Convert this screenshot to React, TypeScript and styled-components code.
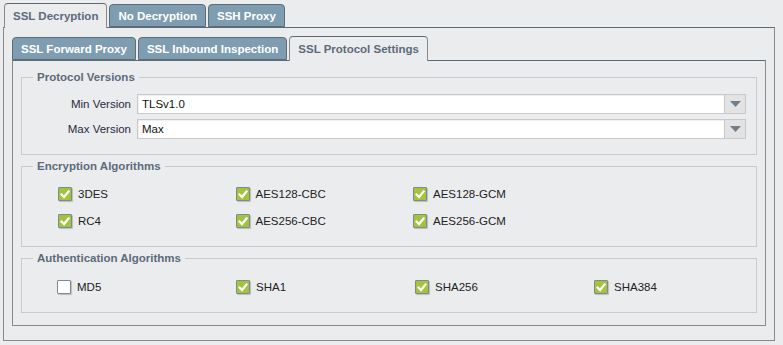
import React, { FC } from 'react';
import styled, { createGlobalStyle } from 'styled-components';

const GlobalStyle = createGlobalStyle`
  html, body {
    margin: 0;
    background: #ebecee;
    font-family: "Liberation Sans", Arial, sans-serif;
    font-size: 11px;
    color: #222;
  }
`;

const Page = styled.div`
  padding: 3px 8px 5px 3px;
`;

const TabStrip = styled.div<{ $inset?: number }>`
  display: flex;
  align-items: flex-end;
  gap: 2px;
  padding-left: ${p => p.$inset ?? 1}px;
`;

const Tab = styled.div<{ $active?: boolean; $pad?: number }>`
  position: relative;
  z-index: ${p => (p.$active ? 2 : 1)};
  box-sizing: border-box;
  height: ${p => (p.$active ? 25 : 23)}px;
  margin-bottom: ${p => (p.$active ? -1 : 0)}px;
  padding: 0 ${p => p.$pad ?? 8}px;
  display: flex;
  align-items: center;
  font-weight: bold;
  font-size: 11.5px;
  border: 1px solid ${p => (p.$active ? '#8a8a8a' : '#5d6d7a')};
  border-top-color: ${p => (p.$active ? '#5d6b77' : '#5d6d7a')};
  border-bottom: ${p => (p.$active ? 'none' : '1px solid #5d6d7a')};
  border-radius: 4px 4px 0 0;
  background: ${p => (p.$active ? '#ebecee' : '#7f9db1')};
  color: ${p => (p.$active ? '#5c6b7a' : '#ffffff')};
  padding-bottom: ${p => (p.$active ? 1 : 0)}px;
`;

const Panel = styled.div<{ $pad: string }>`
  border: 1px solid #8a8a8a;
  border-top-color: #5d6b77;
  padding: ${p => p.$pad};
`;

const Group = styled.fieldset<{ $pad: string }>`
  margin: 0;
  border: 1px solid #c9cacc;
  padding: ${p => p.$pad};
  min-width: 0;
`;

const Legend = styled.legend`
  margin-left: 11px;
  padding: 0 4px;
  font-weight: bold;
  font-size: 11.5px;
  line-height: 14px;
  color: #5c6b7a;
`;

const Stack = styled.div`
  display: flex;
  flex-direction: column;
  gap: 4px;
`;

const FormGrid = styled.div`
  display: grid;
  grid-template-columns: 109px 1fr;
  column-gap: 6px;
  row-gap: 5px;
  align-items: center;
`;

const FieldLabel = styled.div`
  text-align: right;
  color: #2a2a40;
  font-size: 11.5px;
`;

const Select = styled.div`
  display: flex;
  height: 20px;
  box-sizing: border-box;
`;

const SelectValue = styled.div`
  flex: 1;
  display: flex;
  align-items: center;
  padding: 0 4px;
  background: #ffffff;
  border: 1px solid #c9c9c9;
  box-shadow: inset 1px 1px 0 #efefef;
  color: #111;
  font-size: 11.5px;
`;

const SelectButton = styled.div`
  width: 20px;
  display: flex;
  align-items: center;
  justify-content: center;
  background: #e3e3e4;
  border: 1px solid #c9c9c9;
  border-left: none;
`;

const CheckGrid = styled.div<{ $cols: number; $col: number; $indent: number }>`
  display: grid;
  grid-template-columns: repeat(${p => p.$cols}, ${p => p.$col}px);
  row-gap: 7px;
  padding-left: ${p => p.$indent}px;
`;

const CheckItem = styled.label`
  display: flex;
  align-items: center;
  gap: 6px;
  height: 20px;
  color: #222;
  font-size: 11.5px;
`;

const Box = styled.span<{ $checked?: boolean }>`
  width: 14px;
  height: 14px;
  box-sizing: border-box;
  display: flex;
  align-items: center;
  justify-content: center;
  border: 1px solid #7d8a94;
  border-radius: 1px;
  background: ${p => (p.$checked ? '#a3c43a' : '#ffffff')};
  box-shadow: 1px 1px 1px rgba(0, 0, 0, 0.2);
`;

const Check: FC<{ label: string; checked?: boolean }> = ({ label, checked }) => (
  <CheckItem>
    <Box $checked={checked}>
      {checked && (
        <svg width="10" height="9" viewBox="0 0 10 9">
          <polyline points="1.5,4.5 4,7 8.5,1.5" fill="none" stroke="#fff" strokeWidth="2.2" strokeLinecap="square" />
        </svg>
      )}
    </Box>
    {label}
  </CheckItem>
);

const Dropdown: FC<{ value: string }> = ({ value }) => (
  <Select>
    <SelectValue>{value}</SelectValue>
    <SelectButton>
      <svg width="11" height="6" viewBox="0 0 11 6">
        <polygon points="0,0 11,0 5.5,6" fill="#6f7f8b" />
      </svg>
    </SelectButton>
  </Select>
);

const App: FC = () => {
  return (
    <Page>
      <GlobalStyle />
      <TabStrip>
        <Tab $active>SSL Decryption</Tab>
        <Tab>No Decryption</Tab>
        <Tab>SSH Proxy</Tab>
      </TabStrip>
      <Panel $pad="8px 8px 14px 8px">
        <TabStrip $inset={0}>
          <Tab $pad={8}>SSL Forward Proxy</Tab>
          <Tab $pad={8}>SSL Inbound Inspection</Tab>
          <Tab $active $pad={8}>SSL Protocol Settings</Tab>
        </TabStrip>
        <Panel $pad="9px 8px 12px 8px">
          <Stack>
            <Group $pad="10px 10px 15px 0">
              <Legend>Protocol Versions</Legend>
              <FormGrid>
                <FieldLabel>Min Version</FieldLabel>
                <Dropdown value="TLSv1.0" />
                <FieldLabel>Max Version</FieldLabel>
                <Dropdown value="Max" />
              </FormGrid>
            </Group>
            <Group $pad="11px 10px 15px 0">
              <Legend>Encryption Algorithms</Legend>
              <CheckGrid $cols={3} $col={177.5} $indent={36}>
                <Check label="3DES" checked />
                <Check label="AES128-CBC" checked />
                <Check label="AES128-GCM" checked />
                <Check label="RC4" checked />
                <Check label="AES256-CBC" checked />
                <Check label="AES256-GCM" checked />
              </CheckGrid>
            </Group>
            <Group $pad="12px 10px 15px 0">
              <Legend>Authentication Algorithms</Legend>
              <CheckGrid $cols={4} $col={179} $indent={35}>
                <Check label="MD5" />
                <Check label="SHA1" checked />
                <Check label="SHA256" checked />
                <Check label="SHA384" checked />
              </CheckGrid>
            </Group>
          </Stack>
        </Panel>
      </Panel>
    </Page>
  );
};

export default App;
